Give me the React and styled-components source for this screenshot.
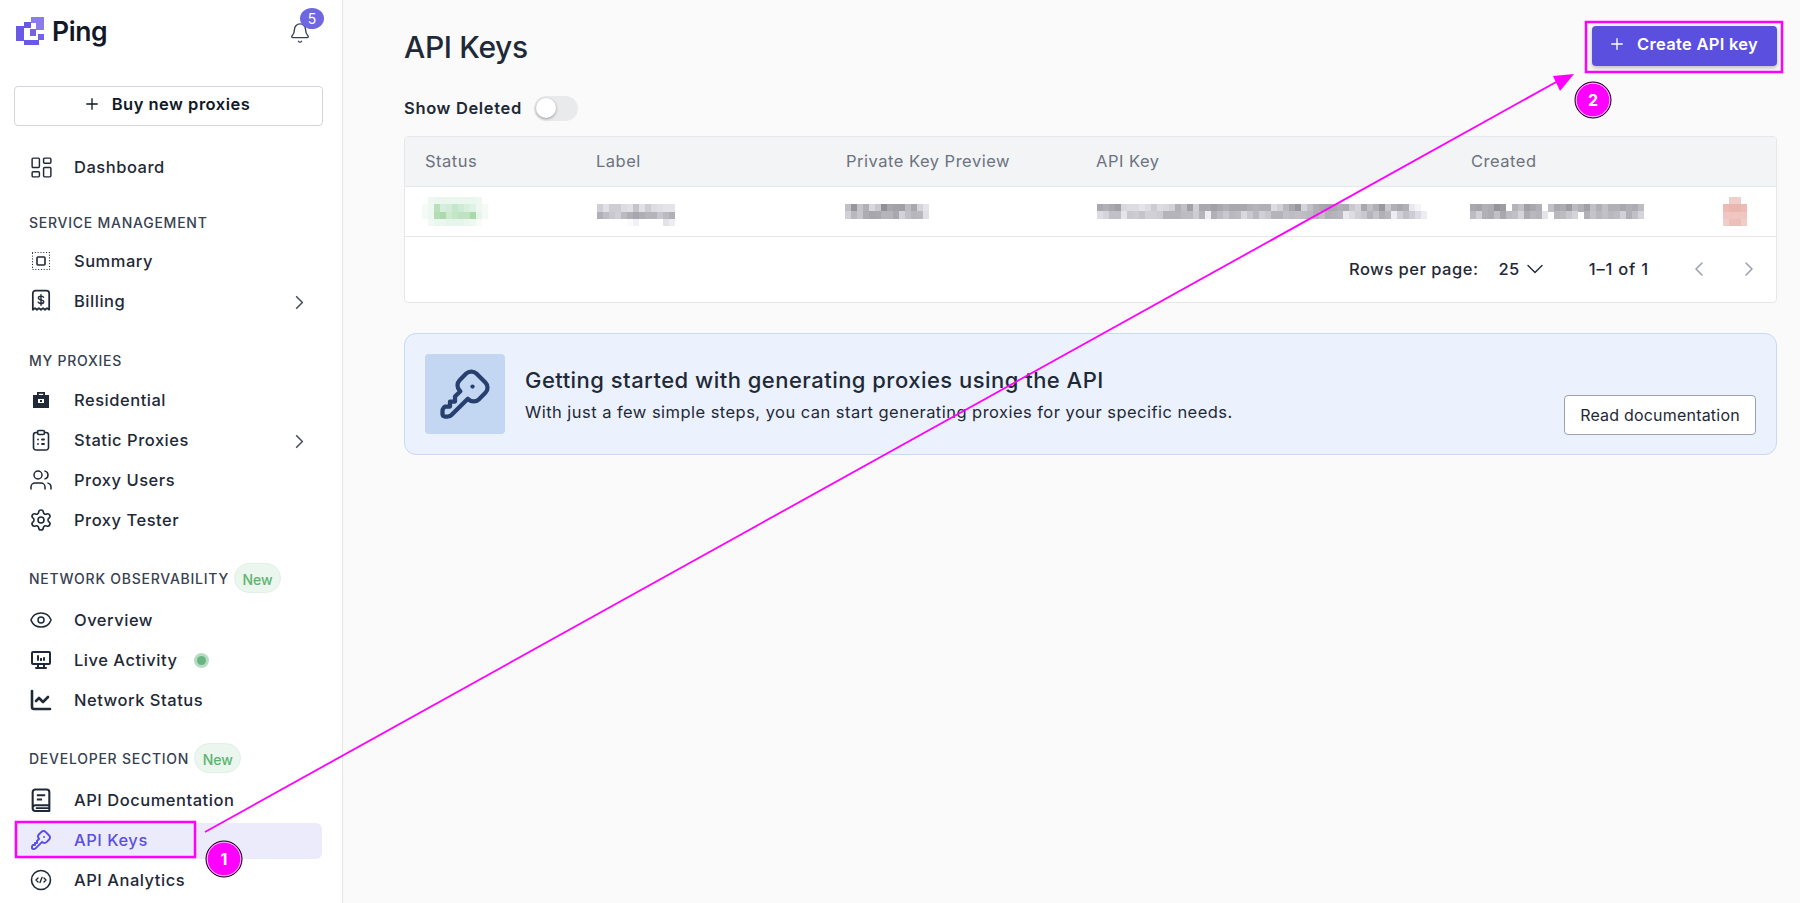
import React from 'react';
import styled, { createGlobalStyle } from 'styled-components';
import {
  LayoutDashboard, ChevronRight, ChevronDown, ChevronLeft, Plus, Bell, Users, Settings, Eye, ChartLine,
} from 'lucide-react';
import { TbKey, TbDeviceDesktopAnalytics } from 'react-icons/tb';

const GlobalStyle = createGlobalStyle`
  html, body {
    margin: 0;
    height: 100%;
    overflow: hidden;
    background: #fafafa;
    font-family: Inter, "Liberation Sans", sans-serif;
    color: #1f2937;
  }
`;

const Page = styled.div`
  position: relative;
  display: flex;
  width: 1800px;
  height: 903px;
  overflow: hidden;
`;

const Sidebar = styled.aside`
  width: 343px;
  flex: none;
  box-sizing: border-box;
  background: #fff;
  border-right: 1px solid #e5e7eb;
  padding: 0 20px 0 14px;
`;

const Brand = styled.div`
  display: flex;
  align-items: center;
  justify-content: space-between;
  height: 64px;
  padding: 0 5px 0 2px;
`;

const LogoWrap = styled.div`
  display: flex;
  align-items: center;
  gap: 6px;
  font-size: 26.5px;
  line-height: 30px;
  font-weight: 600;
  color: #111827;
  letter-spacing: -0.4px;
  padding-bottom: 3px;
`;

const BellWrap = styled.div`
  position: relative;
  display: flex;
  margin-right: 6px;
  margin-top: 2px;
  color: #374151;
`;

const BellBadge = styled.span`
  position: absolute;
  top: -14px;
  left: 11px;
  width: 24px;
  height: 21px;
  border-radius: 50%;
  background: #6f66e3;
  color: #fff;
  font-size: 14px;
  line-height: 21px;
  text-align: center;
`;

const BuyButton = styled.button`
  display: flex;
  align-items: center;
  justify-content: center;
  gap: 10.5px;
  width: 309px;
  height: 40px;
  margin-top: 22px;
  padding: 0 3.5px 4px 0;
  background: #fff;
  border: 1px solid #d1d5db;
  border-radius: 4px;
  font: 600 16.5px Inter, sans-serif;
  color: #111827;
  letter-spacing: 0.5px;
`;

const NavList = styled.nav`
  display: flex;
  flex-direction: column;
  margin-top: 21px;
`;

const NavItem = styled.div`
  position: relative;
  display: flex;
  align-items: center;
  height: ${(p) => (p.$active ? 36 : 40)}px;
  margin: ${(p) => (p.$active ? '3px 0 1px' : '0')};
  padding-bottom: ${(p) => (p.$active ? 2 : 0)}px;
  box-sizing: border-box;
  padding-left: 60px;
  font-size: 16.5px;
  font-weight: 500;
  letter-spacing: 0.52px;
  border-radius: 6px;
  color: ${(p) => (p.$active ? '#5b4fe0' : '#1f2937')};
  background: ${(p) => (p.$active ? '#ecebfb' : 'transparent')};
`;

const IconSlot = styled.span`
  position: absolute;
  left: 14px;
  top: ${(p) => (p.$active ? 5 : 8)}px;
  width: 26px;
  height: 24px;
  display: flex;
  align-items: center;
  justify-content: center;
  color: ${(p) => (p.$active ? '#5b4fe0' : '#1f2937')};
`;

const ChevronSlot = styled.span`
  position: absolute;
  right: 11px;
  top: 10px;
  display: flex;
  color: #4b5563;
`;

const LiveDot = styled.span`
  width: 9px;
  height: 9px;
  margin-left: 20px;
  border-radius: 50%;
  background: #67b583;
  box-shadow: 0 0 0 3px #b7dcc4;
`;

const SectionLabel = styled.div`
  display: flex;
  align-items: center;
  height: 30px;
  padding-left: 15px;
  margin-top: ${(p) => p.$top}px;
  margin-bottom: ${(p) => p.$bottom}px;
  font-size: 14px;
  font-weight: 500;
  letter-spacing: 0.75px;
  color: #374151;
`;

const NewTag = styled.span`
  margin-left: 5px;
  padding: 0 7.5px;
  height: 30px;
  line-height: 31px;
  border-radius: 15px;
  background: #eaf6ee;
  border: 1px solid #e0f1e6;
  box-sizing: border-box;
  color: #5cb56f;
  font-size: 14px;
  letter-spacing: 0;
`;

const Main = styled.main`
  flex: 1;
  min-width: 0;
  box-sizing: border-box;
  padding: 26px 23px 0 61px;
`;

const TopRow = styled.div`
  display: flex;
  align-items: center;
  justify-content: space-between;
  height: 40px;
`;

const Title = styled.h1`
  margin: 2px 0 0;
  font-size: 30px;
  font-weight: 500;
  color: #1f2937;
  letter-spacing: -0.35px;
`;

const CreateButton = styled.button`
  display: flex;
  align-items: center;
  gap: 11px;
  width: 185px;
  height: 40px;
  box-sizing: border-box;
  padding: 0 0 4px 16px;
  border: 0;
  border-radius: 4px;
  background: #5b4fe0;
  box-shadow: 0 2px 4px rgba(0, 0, 0, 0.25);
  color: #fff;
  font: 600 16.5px Inter, sans-serif;
  letter-spacing: 0.3px;
`;

const ToggleRow = styled.div`
  display: flex;
  align-items: center;
  gap: 12.5px;
  height: 26px;
  margin-top: 29px;
  font-size: 16.5px;
  font-weight: 600;
  letter-spacing: 0.65px;
  color: #1f2937;
`;

const Toggle = styled.span`
  position: relative;
  width: 44px;
  height: 25px;
  border-radius: 13px;
  background: #e9eaec;
`;

const Knob = styled.span`
  position: absolute;
  left: 2px;
  top: 2px;
  width: 20px;
  height: 20px;
  border-radius: 50%;
  background: #fff;
  box-shadow: 0 1px 3px rgba(0, 0, 0, 0.35);
`;

const Table = styled.section`
  margin-top: 15px;
  background: #fff;
  border: 1px solid #e5e7eb;
  border-radius: 4px;
  overflow: hidden;
`;

const GridRow = styled.div`
  display: grid;
  grid-template-columns: 171px 250px 250px 375px 1fr;
  align-items: center;
  height: 49px;
  border-bottom: 1px solid #e5e7eb;
  background: ${(p) => (p.$head ? '#f3f4f6' : '#fff')};
`;

const HeadCell = styled.div`
  padding: 0 0 2px 20px;
  font-size: 16.5px;
  color: #6b7280;
  letter-spacing: 0.5px;
`;

const BodyCell = styled.div`
  position: relative;
  padding-left: ${(p) => p.$pad}px;
  display: flex;
`;

const TrashBlur = styled.span`
  position: absolute;
  right: 29px;
  top: -7px;
  display: flex;
`;

const Footer = styled.div`
  display: flex;
  align-items: center;
  justify-content: flex-end;
  height: 65px;
  padding: 0 15px 2px 0;
  box-sizing: border-box;
  font-size: 16.5px;
  letter-spacing: 0.5px;
  color: #1f2937;
`;

const FooterLabel = styled.span`
  font-weight: 500;
  margin-right: 20px;
`;

const PageSelect = styled.span`
  display: flex;
  align-items: center;
  gap: 1px;
  margin-right: 40px;
  font-weight: 500;
`;

const PageCount = styled.span`
  font-weight: 500;
  letter-spacing: 0.8px;
  margin-right: 38px;
`;

const PagerGroup = styled.span`
  display: flex;
  gap: 26px;
  color: #9ca3af;
`;

const Banner = styled.section`
  display: flex;
  align-items: center;
  gap: 20px;
  margin-top: 30px;
  height: 122px;
  box-sizing: border-box;
  padding: 0 20px;
  border: 1px solid #c8daf4;
  border-radius: 12px;
  background: #ebf2fd;
`;

const KeyBox = styled.div`
  display: flex;
  align-items: center;
  justify-content: center;
  width: 80px;
  height: 80px;
  flex: none;
  border-radius: 4px;
  background: #c3d6f2;
  color: #27406f;
`;

const BannerText = styled.div`
  flex: 1;
  min-width: 0;
`;

const BannerTitle = styled.div`
  font-size: 22px;
  font-weight: 500;
  color: #1f2937;
  letter-spacing: 0.47px;
`;

const BannerBody = styled.div`
  margin-top: 9px;
  font-size: 16.5px;
  color: #1f2937;
  letter-spacing: 0.46px;
`;

const DocsButton = styled.button`
  align-self: flex-end;
  width: 192px;
  height: 40px;
  margin-bottom: 19px;
  background: #fff;
  border: 1px solid #9ca3af;
  border-radius: 4px;
  font: 400 16px Inter, sans-serif;
  letter-spacing: 0.2px;
  color: #1f2937;
`;

const Overlay = styled.svg`
  position: absolute;
  inset: 0;
  pointer-events: none;
`;

const Mosaic = ({ rows, tint }) => {
  const cw = 6;
  const ch = 7.33;
  const width = Math.max(...rows.map((r) => r.length)) * cw;
  return (
    <svg width={width} height={rows.length * ch} shapeRendering="crispEdges">
      {rows.map((row, y) =>
        row.map((v, x) =>
          v ? (
            <rect
              key={`${x}-${y}`}
              x={x * cw}
              y={y * ch}
              width={cw}
              height={ch + 0.4}
              fill={tint ? v : `rgb(${parseInt(v, 16)},${parseInt(v, 16)},${parseInt(v, 16) + 6})`}
            />
          ) : null
        )
      )}
    </svg>
  );
};

// shades as hex, "." leaves the cell empty
const shades = (s) => s.split(' ').map((v) => (v === '.' ? null : v));

const STATUS_ROWS = [
  [null, '#eef8f1', '#eaf7ee', '#eaf7ee', '#eaf7ee', '#eaf7ee', '#eaf7ee', '#eaf7ee', '#eaf7ee', '#eef8f1', null],
  ['#f4faf6', '#eef8f1', '#badfb9', '#d6eedd', '#d2ecd8', '#c6e6cc', '#cfead5', '#d8efdd', '#e0f2e4', '#eef8f1', '#f4faf6'],
  ['#f4faf6', '#eef8f1', '#b5ddb5', '#acd9ad', '#cdeacf', '#c2e6c6', '#bfe3c2', '#bfe3c2', '#a9d8aa', '#e6f5ea', '#f4faf6'],
  [null, '#f0f9f3', '#eaf7ee', '#eaf7ee', '#e6f5ea', '#e6f5ea', '#e6f5ea', '#eaf7ee', '#eef8f1', '#f8fcf9', null],
];

const LABEL_ROWS = [
  [],
  shades('cf e0 cd cd dc e0 c4 e0 cd dc e0 e4 e4'),
  shades('b0 bd c8 cf ba af a6 ae b4 b4 c6 ba b0'),
  shades('. . . . . fa f0 . . . . e2 ec'),
];

const PREVIEW_ROWS = [
  shades('c0 96 c4 b0 d8 c8 90 a6 a2 a0 bc a8 d4 e4'),
  shades('d0 b8 c6 ac a6 a8 b4 b4 a8 d2 c0 b6 b8 e0'),
];

const API_ROWS = [
  shades('a8 b0 a8 a0 d8 dc dc e4 dc cc dc d8 d0 b0 c0 a0 d0 a8 a8 a0 a8 b0 a8 a8 a8 b0 b4 b0 b0 dc d0 b8 a8 98 d4 c0 b0 a8 a4 a8 b0 ac c8 d4 a8 c0 b0 98 c8 b0 a8 b0 e8 f4 .'),
  shades('dc d4 c0 c0 e4 c8 cc c4 d0 d0 cc b4 b4 b4 bc bc cc b4 ee b0 bc c8 b8 bc d8 c8 b8 d0 c8 b4 b4 c0 bc c0 bc b8 b0 c0 b0 b4 b8 e8 dc d0 c8 b4 c4 b0 b8 ec d0 c0 cc dc ec'),
];

const CREATED_ROWS = [
  shades('a8 a4 b0 ac 94 9c . b4 c0 a0 a8 b0 . c0 a8 ac 9c ba b0 a0 c0 b0 c0 b0 b0 a8 b0 ac bc'),
  shades('bc d0 b0 ac c0 a8 bc c0 d4 ac b8 b4 e4 . b8 bc c8 d4 . b0 c4 b8 c0 b8 bc d0 b0 c0 d4'),
];

const TRASH_ROWS = [
  [null, '#f0cfcb', '#f0cfcb', null],
  ['#edbab4', '#ecb6b0', '#ecb6b0', '#edbab4'],
  ['#efc6c1', '#efc6c1', '#efc6c1', '#efc6c1'],
  ['#f1cdc9', '#eebfba', '#eebfba', '#f1cdc9'],
];

const Logo = () => (
  <svg width="30" height="30" viewBox="2 0 30 30" shapeRendering="crispEdges">
    <path d="M10 6h7v6h-7zM2 10h8v15H2zM10 24h15v5H10z" fill="#6a58e6" />
    <path d="M16 13h6v7h-6zM24 18h6v6h-6z" fill="#7463e8" />
    <path d="M17 1h13v13H22V7h-5z" fill="#8b7ceb" />
  </svg>
);

const stroke = { fill: 'none', stroke: 'currentColor', strokeWidth: 1.6, strokeLinecap: 'round', strokeLinejoin: 'round' };

const SummaryIcon = () => (
  <svg width="20" height="20" viewBox="0 0 20 20">
    <rect x="6" y="6" width="8" height="8" rx="1" {...stroke} />
    <rect x="1.5" y="1.5" width="17" height="17" {...stroke} strokeWidth="1.2" strokeDasharray="0.1 2.7" />
  </svg>
);

const BillingIcon = () => (
  <svg width="22" height="24" viewBox="0 0 20 22">
    <path d="M2.5 19V4a2.5 2.5 0 0 1 2.5-2.5h10A2.5 2.5 0 0 1 17.5 4v15l-2-1.5-1.8 1.5-1.8-1.5-1.9 1.5-1.9-1.5-1.8 1.5-1.8-1.5z" {...stroke} />
    <path d="M12.4 7.6c-.4-.8-1.3-1.1-2.4-1.1-1.4 0-2.4.6-2.4 1.7 0 2.400 4.900 1.100 4.900 3.400 0 1.100-1.100 1.700-2.500 1.700-1.200 0-2.100-.4-2.600-1.200M10 5.200v9.800" {...stroke} strokeWidth="1.3" />
  </svg>
);

const ResidentialIcon = () => (
  <svg width="18" height="18" viewBox="0 0 18 18">
    <path fillRule="evenodd" fill="currentColor" d="M5 1h8v3h4v13H1V4h4zm1.800 1.800V4h4.400V2.800zM6 8v4h6V8z" />
    <rect x="8" y="9" width="2" height="2" fill="currentColor" />
  </svg>
);

const StaticIcon = () => (
  <svg width="20" height="22" viewBox="0 0 20 22">
    <path d="M6.500 3.500H5A2.500 2.500 0 0 0 2.500 6v12.500A2.500 2.500 0 0 0 5 21h10a2.500 2.500 0 0 0 2.500-2.500V6A2.500 2.500 0 0 0 15 3.500h-1.500" {...stroke} />
    <rect x="6.500" y="1.500" width="7" height="4" rx="1.500" {...stroke} />
    <path d="M7 10.500h.01M7 15h.01M11 10.500h2M11 15h2" {...stroke} strokeWidth="1.800" />
  </svg>
);

const BookIcon = () => (
  <svg width="24" height="25" viewBox="0 0 22 24">
    <path d="M3 18.500V4a2.500 2.500 0 0 1 2.500-2.500h11A2.500 2.500 0 0 1 19 4v12.500H5.500A2.500 2.500 0 0 0 3 19v.5A2.500 2.500 0 0 0 5.500 22H19v-5.500" fill="none" stroke="currentColor" strokeWidth="2" strokeLinejoin="round" />
    <path d="M7 7h8M7 11h5M6 19.300h13" fill="none" stroke="currentColor" strokeWidth="1.800" />
  </svg>
);

const CodeIcon = () => (
  <svg width="24" height="24" viewBox="0 0 24 24">
    <circle cx="12" cy="12" r="9.500" {...stroke} />
    <path d="M9 10l-2 2 2 2M15 10l2 2-2 2M13 9.500l-2 5" {...stroke} strokeWidth="1.400" />
  </svg>
);

const Item = ({ icon, label, chevron, active, children }) => (
  <NavItem $active={active}>
    <IconSlot $active={active}>{icon}</IconSlot>
    {label}
    {children}
    {chevron && (
      <ChevronSlot>
        <ChevronRight size={23} strokeWidth={1.8} />
      </ChevronSlot>
    )}
  </NavItem>
);

const Callouts = () => (
  <Overlay width="1800" height="903" viewBox="0 0 1800 903">
    <rect x="16" y="822" width="179" height="35" fill="none" stroke="#f0f" strokeWidth="2.5" />
    <rect x="1586" y="22" width="196" height="50" fill="none" stroke="#f0f" strokeWidth="2.5" />
    <line x1="205" y1="832" x2="1558" y2="81" stroke="#f0f" strokeWidth="1.800" />
    <polygon points="1574,74 1553,76 1560,91" fill="#f0f" />
    <circle cx="224" cy="859" r="18" fill="#f0f" stroke="#000" strokeWidth="1" />
    <circle cx="224" cy="859" r="16.800" fill="none" stroke="#fff" strokeWidth="0.800" />
    <text x="224" y="865" textAnchor="middle" fontFamily="Inter, sans-serif" fontWeight="700" fontSize="16" fill="#fff">1</text>
    <circle cx="1593" cy="100" r="18" fill="#f0f" stroke="#000" strokeWidth="1" />
    <circle cx="1593" cy="100" r="16.800" fill="none" stroke="#fff" strokeWidth="0.800" />
    <text x="1593" y="106" textAnchor="middle" fontFamily="Inter, sans-serif" fontWeight="700" fontSize="16" fill="#fff">2</text>
  </Overlay>
);

export default function App() {
  return (
    <Page>
      <GlobalStyle />
      <Sidebar>
        <Brand>
          <LogoWrap>
            <Logo />
            Ping
          </LogoWrap>
          <BellWrap>
            <Bell size={22} strokeWidth={1.5} />
            <BellBadge>5</BellBadge>
          </BellWrap>
        </Brand>
        <BuyButton>
          <Plus size={18} strokeWidth={1.8} />
          Buy new proxies
        </BuyButton>
        <NavList>
          <Item icon={<LayoutDashboard size={25} strokeWidth={1.4} />} label="Dashboard" />
          <SectionLabel $top={20} $bottom={4}>SERVICE MANAGEMENT</SectionLabel>
          <Item icon={<SummaryIcon />} label="Summary" />
          <Item icon={<BillingIcon />} label="Billing" chevron />
          <SectionLabel $top={24} $bottom={5}>MY PROXIES</SectionLabel>
          <Item icon={<ResidentialIcon />} label="Residential" />
          <Item icon={<StaticIcon />} label="Static Proxies" chevron />
          <Item icon={<Users size={24} strokeWidth={1.5} />} label="Proxy Users" />
          <Item icon={<Settings size={24} strokeWidth={1.6} />} label="Proxy Tester" />
          <SectionLabel $top={23} $bottom={7}>
            NETWORK OBSERVABILITY<NewTag>New</NewTag>
          </SectionLabel>
          <Item icon={<Eye size={24} strokeWidth={1.5} />} label="Overview" />
          <Item icon={<TbDeviceDesktopAnalytics size={24} />} label="Live Activity">
            <LiveDot />
          </Item>
          <Item icon={<ChartLine size={24} strokeWidth={2.6} />} label="Network Status" />
          <SectionLabel $top={23} $bottom={7}>
            DEVELOPER SECTION<NewTag>New</NewTag>
          </SectionLabel>
          <Item icon={<BookIcon />} label="API Documentation" />
          <Item icon={<TbKey size={24} />} label="API Keys" active />
          <Item icon={<CodeIcon />} label="API Analytics" />
        </NavList>
      </Sidebar>
      <Main>
        <TopRow>
          <Title>API Keys</Title>
          <CreateButton>
            <Plus size={18} strokeWidth={1.8} />
            Create API key
          </CreateButton>
        </TopRow>
        <ToggleRow>
          Show Deleted
          <Toggle>
            <Knob />
          </Toggle>
        </ToggleRow>
        <Table>
          <GridRow $head>
            <HeadCell>Status</HeadCell>
            <HeadCell>Label</HeadCell>
            <HeadCell>Private Key Preview</HeadCell>
            <HeadCell>API Key</HeadCell>
            <HeadCell>Created</HeadCell>
          </GridRow>
          <GridRow>
            <BodyCell $pad={17}><Mosaic rows={STATUS_ROWS} tint /></BodyCell>
            <BodyCell $pad={21}><Mosaic rows={LABEL_ROWS} /></BodyCell>
            <BodyCell $pad={19}><Mosaic rows={PREVIEW_ROWS} /></BodyCell>
            <BodyCell $pad={21}><Mosaic rows={API_ROWS} /></BodyCell>
            <BodyCell $pad={19}>
              <Mosaic rows={CREATED_ROWS} />
              <TrashBlur><Mosaic rows={TRASH_ROWS} tint /></TrashBlur>
            </BodyCell>
          </GridRow>
          <Footer>
            <FooterLabel>Rows per page:</FooterLabel>
            <PageSelect>
              25
              <ChevronDown size={28} strokeWidth={1.2} />
            </PageSelect>
            <PageCount>1–1 of 1</PageCount>
            <PagerGroup>
              <ChevronLeft size={24} strokeWidth={1.6} />
              <ChevronRight size={24} strokeWidth={1.6} />
            </PagerGroup>
          </Footer>
        </Table>
        <Banner>
          <KeyBox>
            <TbKey size={60} strokeWidth={1.7} />
          </KeyBox>
          <BannerText>
            <BannerTitle>Getting started with generating proxies using the API</BannerTitle>
            <BannerBody>With just a few simple steps, you can start generating proxies for your specific needs.</BannerBody>
          </BannerText>
          <DocsButton>Read documentation</DocsButton>
        </Banner>
      </Main>
      <Callouts />
    </Page>
  );
}
